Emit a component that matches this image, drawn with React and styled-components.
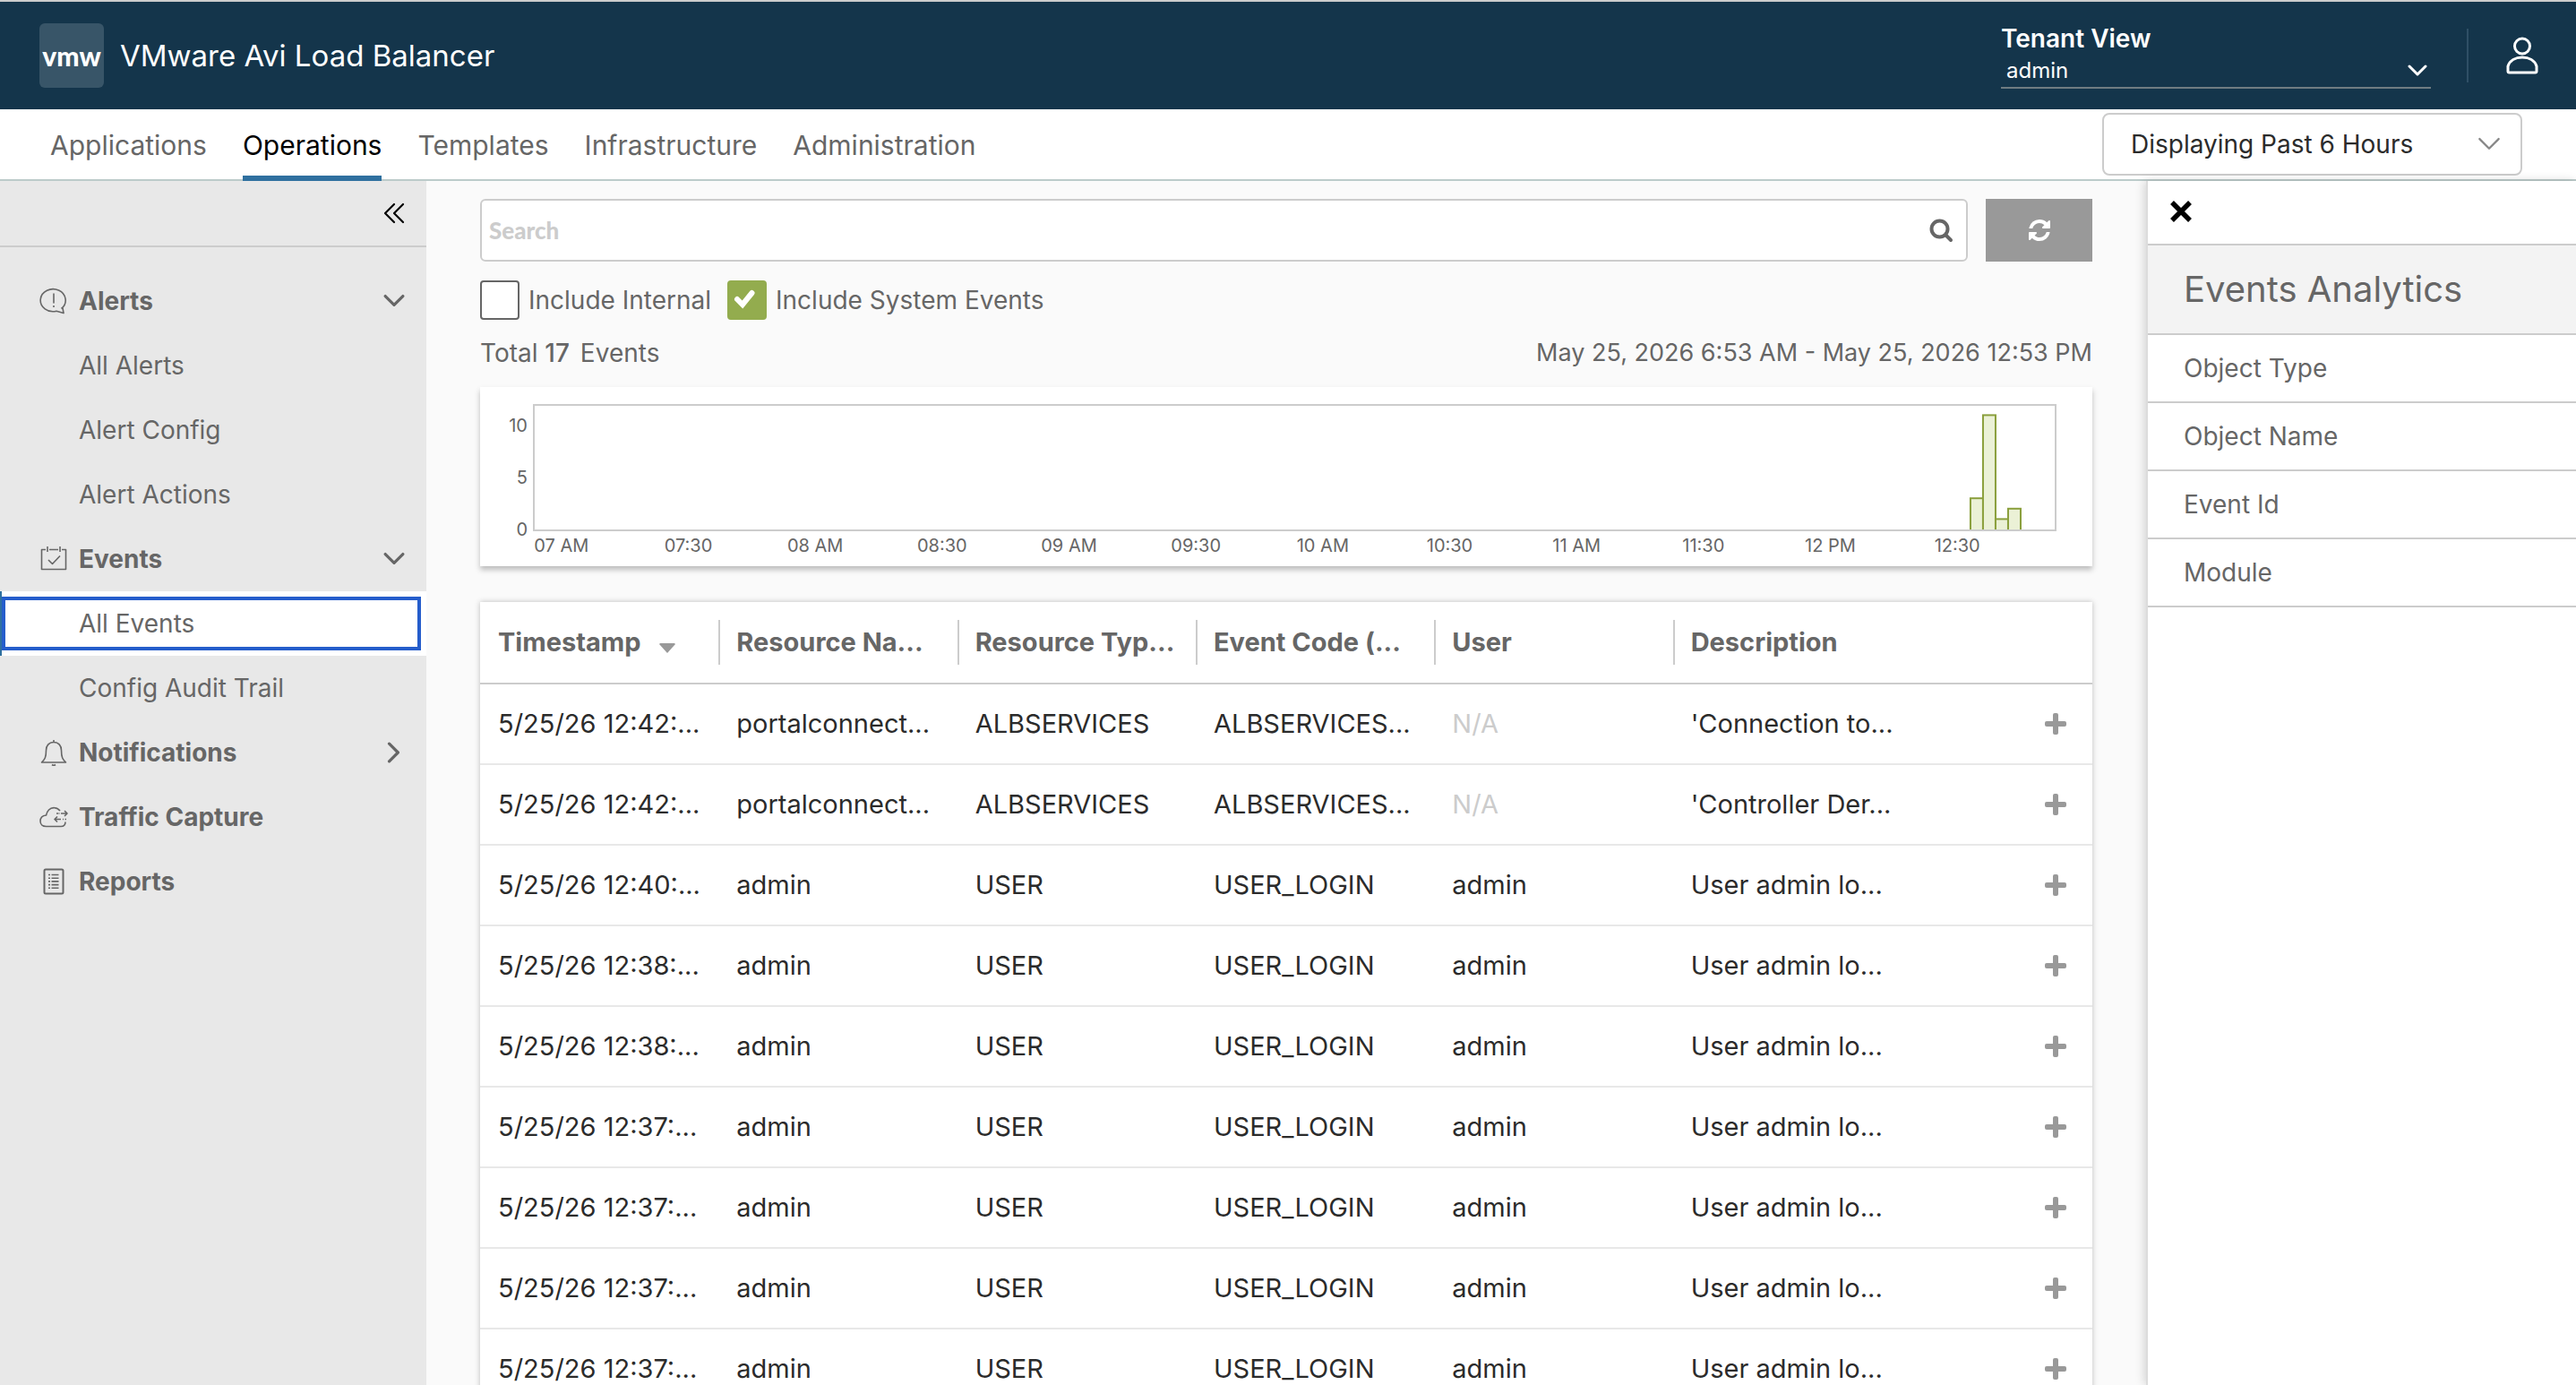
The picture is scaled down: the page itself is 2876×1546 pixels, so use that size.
import React from 'react';
import styled, { createGlobalStyle, css } from 'styled-components';

const colors = {
  header: '#14354b',
  blue: '#2f709f',
  focus: '#255dcb',
  line: '#cccccc',
  text: '#666666',
  dark: '#2b2b2b',
  green: '#93ac4e',
};

const GlobalStyle = createGlobalStyle`
  *, *::before, *::after {
    box-sizing: border-box;
  }

  body {
    margin: 0;
    background: #fafafa;
    color: ${colors.text};
    font: 400 28px/36px Inter, "Open Sans", sans-serif;
  }

  button, input, select {
    margin: 0;
    padding: 0;
    border: 0;
    background: none;
    color: inherit;
    font: inherit;
  }

  svg {
    display: block;
    flex: none;
  }
`;

const Page = styled.div`
  display: flex;
  flex-direction: column;
  height: 100vh;
  overflow: hidden;
`;

/* header */

const Header = styled.header`
  display: flex;
  align-items: center;
  flex: none;
  height: 122px;
  padding: 0 40px 0 44px;
  border-top: 2px solid ${colors.line};
  background: ${colors.header};
  color: #fff;
`;

const Logo = styled.div`
  display: flex;
  align-items: center;
  justify-content: center;
  width: 72px;
  height: 72px;
  border-radius: 6px;
  background: #385568;
  font: 900 30px/36px Lato, sans-serif;
`;

const Product = styled.h1`
  flex: 1;
  margin: 0 0 0 18px;
  font-size: 33px;
  font-weight: 400;
`;

const Tenant = styled.div`
  display: flex;
  flex-direction: column;
  width: 480px;
  margin-right: 40px;
  border-bottom: 2px solid #6f7c82;
`;

const TenantLabel = styled.label`
  font-size: 28px;
  font-weight: 600;
`;

const SelectWrap = styled.div`
  display: grid;
  align-items: center;

  > * {
    grid-area: 1 / 1;
  }

  > svg {
    justify-self: end;
    margin-right: 4px;
    pointer-events: none;
  }
`;

const TenantSelect = styled.select`
  width: 100%;
  height: 36px;
  padding: 0 6px;
  appearance: none;
  font-size: 24px;
`;

const UserArea = styled.div`
  display: flex;
  align-items: center;
  justify-content: flex-end;
  width: 82px;
  height: 60px;
  padding-right: 2px;
  border-left: 2px solid #2f4f66;
`;

const IconButton = styled.button`
  display: flex;
  align-items: center;
  justify-content: center;
  cursor: pointer;
`;

/* main navigation */

const NavBar = styled.nav`
  display: flex;
  align-items: stretch;
  justify-content: space-between;
  flex: none;
  height: 80px;
  padding: 0 60px 0 56px;
  border-bottom: 2px solid #bccbca;
  background: #fff;
`;

const Tabs = styled.div`
  display: flex;
  gap: 40px;
  margin-bottom: -2px;
`;

const Tab = styled.a`
  border-bottom: 6px solid transparent;
  color: ${colors.text};
  font-size: 30px;
  line-height: 80px;
  text-decoration: none;

  ${props => props.$active && css`
    border-color: ${colors.blue};
    color: #000;
  `}
`;

const RangeWrap = styled(SelectWrap)`
  align-self: center;
  width: 469px;
  height: 70px;
  border: 2px solid ${colors.line};
  border-radius: 8px;

  > svg {
    margin-right: 22px;
    color: #888;
  }
`;

const RangeSelect = styled.select`
  width: 100%;
  height: 66px;
  padding: 0 30px;
  appearance: none;
  color: ${colors.dark};
`;

/* sidebar */

const Body = styled.div`
  display: flex;
  flex: 1;
  min-height: 0;
`;

const Sidebar = styled.aside`
  flex: none;
  width: 476px;
  background: #e8e8e8;
`;

const SidebarTop = styled.div`
  display: flex;
  align-items: center;
  justify-content: flex-end;
  height: 74px;
  margin-bottom: 24px;
  padding-right: 24px;
  border-bottom: 2px solid ${colors.line};
`;

const Group = styled.button`
  display: flex;
  align-items: center;
  width: 100%;
  height: 72px;
  padding: 0 24px 0 44px;
  font-weight: 700;
  text-align: left;
`;

const GroupName = styled.span`
  flex: 1;
  margin-left: 12px;
`;

const SideLink = styled.a`
  display: block;
  padding-left: 88px;
  color: ${colors.text};
  line-height: 72px;
  text-decoration: none;
`;

// white strip with the focused link inside it
const ActiveItem = styled.div`
  padding: 6px 6px 6px 0;
  border-left: 2px solid ${colors.blue};
  background: #fff;

  ${SideLink} {
    padding-left: 82px;
    border: 4px solid ${colors.focus};
    line-height: 52px;
  }
`;

/* content */

const Content = styled.main`
  flex: 1;
  min-width: 0;
  padding: 20px 60px 0;
`;

const SearchRow = styled.div`
  display: flex;
  gap: 20px;
  height: 70px;
`;

const SearchBox = styled.div`
  display: flex;
  align-items: center;
  flex: 1;
  padding: 0 14px 0 8px;
  border: 2px solid ${colors.line};
  border-radius: 6px;
  background: #fff;
  color: ${colors.text};
`;

const SearchInput = styled.input`
  flex: 1;
  min-width: 0;
  height: 100%;
  outline: none;
  font: 900 26px/36px Lato, sans-serif;

  &::placeholder {
    color: ${colors.line};
    opacity: 1;
  }
`;

const Refresh = styled(IconButton)`
  width: 119px;
  background: #999;
  color: #fff;
`;

const Filters = styled.div`
  display: flex;
  gap: 18px;
  margin-top: 20px;
`;

const CheckLabel = styled.label`
  display: flex;
  align-items: center;
  gap: 10px;
  height: 46px;
`;

const CheckBox = styled.span`
  display: grid;
  width: 44px;
  height: 44px;

  > * {
    grid-area: 1 / 1;
  }

  > svg {
    margin: 6px 0 0 6px;
    pointer-events: none;
  }
`;

const CheckInput = styled.input`
  width: 44px;
  height: 44px;
  border: 2px solid ${colors.text};
  border-radius: 4px;
  appearance: none;
  background: #fff;

  &:checked {
    border-color: ${colors.green};
    background: ${colors.green};
  }
`;

const Summary = styled.div`
  display: flex;
  justify-content: space-between;
  padding: 18px 0 20px;

  strong {
    margin-right: 4px;
    font-weight: 500;
  }
`;

const Period = styled.span`
  font-size: 27px;
`;

const ChartCard = styled.section`
  height: 200px;
  padding: 19px 40px 0 20px;
  background: #fff;
  box-shadow: 0 4px 6px rgba(0, 0, 0, 0.25);
  font-size: 20px;
  line-height: 24px;
`;

const ChartRow = styled.div`
  display: flex;
  gap: 6px;
  height: 146px;
`;

const AxisY = styled.div`
  display: flex;
  flex-direction: column;
  justify-content: space-between;
  width: 33px;
  height: 140px;
  margin-top: 12px;
  text-align: right;
`;

const Plot = styled.div`
  flex: 1;
  height: 142px;
  border: 2px solid ${colors.line};
`;

const AxisX = styled.div`
  display: grid;
  grid-template-columns: repeat(12, 1fr);
  margin-right: 40px;
  text-align: center;
`;

/* table */

const TableCard = styled.section`
  margin-top: 40px;
  background: #fff;
  box-shadow: 0 0 6px rgba(0, 0, 0, 0.25);
`;

const Table = styled.table`
  width: 100%;
  border-collapse: separate;
  border-spacing: 0;
  table-layout: fixed;
  font-size: 29px;
  white-space: nowrap;
`;

const ActionCol = styled.col`
  width: 202px;
`;

const HeadCell = styled.th`
  height: 92px;
  padding: 0;
  border-bottom: 2px solid ${colors.line};
  font-weight: 700;
  text-align: left;
`;

const HeadLabel = styled.div`
  display: flex;
  align-items: center;
  gap: 20px;
  height: 50px;
  padding-left: ${props => (props.$first ? '20px' : '18px')};
  border-left: ${props => (props.$first ? '0' : `2px solid ${colors.line}`)};

  svg {
    margin-top: 12px;
  }
`;

const Cell = styled.td`
  height: 90px;
  padding: 0 0 0 20px;
  border-bottom: 2px solid #e8e8e8;
  color: ${props => (props.$muted ? colors.line : colors.dark)};
`;

const ActionCell = styled(Cell)`
  padding-right: 29px;
  color: #999;

  button {
    margin-left: auto;
  }
`;

/* analytics panel */

const Panel = styled.aside`
  flex: none;
  width: 480px;
  border-left: 2px solid #dcdcdc;
  background: #fff;
  box-shadow: -2px 0 10px rgba(0, 0, 0, 0.16);
`;

const PanelTop = styled.div`
  display: flex;
  align-items: center;
  height: 72px;
  padding: 0 25px 2px;
  border-bottom: 2px solid ${colors.line};
  color: #000;
`;

const PanelTitle = styled.h2`
  margin: 0;
  padding-left: 40px;
  border-bottom: 2px solid ${colors.line};
  background: #f3f3f3;
  font-size: 40px;
  font-weight: 400;
  line-height: 98px;
`;

const PanelItem = styled.button`
  display: block;
  width: 100%;
  height: 76px;
  padding-left: 40px;
  border-bottom: 2px solid ${colors.line};
  text-align: left;
`;

/* icons */

const Chevron = ({ size = 22, stroke = 4, right }) => (
  <svg width={size} height={size} viewBox="0 0 22 22" fill="none" stroke="currentColor"
    strokeWidth={stroke} strokeLinecap="round" strokeLinejoin="round">
    <path d={right ? 'M6 2l9 9-9 9' : 'M2 6l9 9 9-9'}/>
  </svg>
);

const UserIcon = () => (
  <svg width="36" height="42" viewBox="0 0 36 42" fill="none" stroke="currentColor" strokeWidth="3">
    <circle cx="18" cy="10.5" r="8.5"/>
    <path d="M2 38.5V33C4 26.500 10.500 23 18 23s14 3.500 16 10v5.500q0 1.500-1.500 1.500h-29Q2 40 2 38.500z"/>
  </svg>
);

const CollapseIcon = () => (
  <svg width="24" height="24" viewBox="0 0 24 24" fill="none" stroke="#000"
    strokeWidth="2.200" strokeLinecap="round" strokeLinejoin="round">
    <path d="M12 2L2 12l10 10M22 2L12 12l10 10"/>
  </svg>
);

const SearchIcon = () => (
  <svg width="28" height="28" viewBox="0 0 28 28" fill="none" stroke="currentColor" strokeLinecap="round">
    <circle cx="12.500" cy="12.500" r="9" strokeWidth="4"/>
    <path d="M19.500 19.500l5.500 5.500" strokeWidth="4"/>
  </svg>
);

const RefreshIcon = () => (
  <svg width="28" height="28" viewBox="0 0 1792 1792" fill="currentColor">
    <path d="M1639 1056q0 5-1 7-64 268-268 434.500t-478 166.500q-146 0-282.500-55t-243.500-157l-129 129q-19 19-45 19t-45-19-19-45v-448q0-26 19-45t45-19h448q26 0 45 19t19 45-19 45l-137 137q71 66 161 102t187 36q134 0 250-65t186-179q11-17 53-117 8-23 30-23h192q13 0 22.500 9.500t9.500 22.500zm25-800v448q0 26-19 45t-45 19h-448q-26 0-45-19t-19-45 19-45l138-138q-148-137-349-137-134 0-250 65t-186 179q-11 17-53 117-8 23-30 23h-199q-13 0-22.500-9.500t-9.500-22.500v-7q65-268 270-434.500t480-166.500q146 0 284 55.500t245 156.500l130-129q19-19 45-19t45 19 19 45z"/>
  </svg>
);

const CheckIcon = () => (
  <svg width="28" height="28" viewBox="0 0 28 28" fill="none" stroke="#fff" strokeWidth="6" strokeLinecap="round">
    <path d="M5 15l6 6L21.500 8"/>
  </svg>
);

const CloseIcon = () => (
  <svg width="24" height="24" viewBox="0 0 24 24" fill="none" stroke="currentColor" strokeWidth="5.500">
    <path d="M2 2l20 20M22 2L2 22"/>
  </svg>
);

const PlusIcon = () => (
  <svg width="24" height="24" viewBox="0 0 24 24" fill="currentColor">
    <rect x="9" y="0" width="6" height="24" rx="2"/>
    <rect x="0" y="9" width="24" height="6" rx="2"/>
  </svg>
);

const SortIcon = () => (
  <svg width="18" height="11" viewBox="0 0 18 11" fill="#999">
    <path d="M1 0h16l1 1-9 10L0 1z"/>
  </svg>
);

const groupIcons = {
  alerts: (
    <>
      <path d="M24.500 24.500A14 12.500 0 1 0 19 27.200L27 29.500 26 24"/>
      <path d="M16 7.500v11M16 21v2"/>
    </>
  ),
  events: (
    <path d="M7 5.500H2.500v22h27v-22H25M11 5.500h10M9 2v6M23 2v6M10 17l4.500 4.500L23 12.500"/>
  ),
  notifications: (
    <>
      <path d="M16 4.500c-5.500 0-8.500 4-8.500 9 0 8-1.500 10-5 13.500h27c-3.500-3.500-5-5.500-5-13.500 0-5-3-9-8.500-9zM16 2v2.500"/>
      <path d="M14 29.500q2 1.500 4 0"/>
    </>
  ),
  traffic: (
    <>
      <path d="M23 9C20 5 14 4.500 10.500 8 8.500 10 8 12 7.500 14 3 14.500 1 17.500 1 20.500c0 3.500 2.500 6 6.500 6H24c3 0 5-2 5-5"/>
      <path d="M24 12h7M28 9l3 3-3 3M24 18.500h-7M20 15.500l-3 3 3 3"/>
      <path d="M19 12h2M21.500 12h1M26 18.500h1M28.500 18.500h1.500"/>
    </>
  ),
  reports: (
    <>
      <rect x="5.500" y="2.500" width="21" height="27" rx="1.500" strokeWidth="2"/>
      <path d="M10 8.500h2M10 12.200h2M10 15.900h2M10 19.600h2M10 23.300h2M13.500 8.500h8M13.500 12.200h8M13.500 15.900h8M13.500 19.600h8M13.500 23.300h8"/>
    </>
  ),
};

const GroupIcon = ({ name }) => (
  <svg width="32" height="32" viewBox="0 0 32 32" fill="none" stroke="currentColor" strokeWidth="1.600"
    strokeLinejoin="round">
    {groupIcons[name]}
  </svg>
);

/* data */

const tabs = ['Applications', 'Operations', 'Templates', 'Infrastructure', 'Administration'];

const groups = [
  { name: 'Alerts', icon: 'alerts', open: true, items: ['All Alerts', 'Alert Config', 'Alert Actions'] },
  { name: 'Events', icon: 'events', open: true, items: ['All Events', 'Config Audit Trail'] },
  { name: 'Notifications', icon: 'notifications', open: false, items: [] },
  { name: 'Traffic Capture', icon: 'traffic' },
  { name: 'Reports', icon: 'reports' },
];

const hours = [
  '07 AM', '07:30', '08 AM', '08:30', '09 AM', '09:30',
  '10 AM', '10:30', '11 AM', '11:30', '12 PM', '12:30',
];

const counts = [3, 11, 1, 2];

const columns = ['Timestamp', 'Resource Na...', 'Resource Typ...', 'Event Code (...', 'User', 'Description'];

const login = time => [`5/25/26 ${time}:...`, 'admin', 'USER', 'USER_LOGIN', 'admin', 'User admin lo...'];

const events = [
  ['5/25/26 12:42:...', 'portalconnect...', 'ALBSERVICES', 'ALBSERVICES...', 'N/A', "'Connection to..."],
  ['5/25/26 12:42:...', 'portalconnect...', 'ALBSERVICES', 'ALBSERVICES...', 'N/A', "'Controller Der..."],
  ...['12:40', '12:38', '12:38', '12:37', '12:37', '12:37', '12:37'].map(login),
];

const Chart = () => (
  <ChartCard>
    <ChartRow>
      <AxisY>
        <span>10</span>
        <span>5</span>
        <span>0</span>
      </AxisY>
      <Plot>
        <svg width="100%" height="138" viewBox="0 0 1696 138" preserveAspectRatio="none">
          {counts.map((count, idx) =>
            <rect key={idx} x={1602 + idx * 14} y={138 - count * 11.6} width="14" height={count * 11.6 + 4}
              fill="#ebf1d6" stroke="#8a9f3c" strokeWidth="2"/>)}
        </svg>
      </Plot>
    </ChartRow>
    <AxisX>
      {hours.map(hour => <span key={hour}>{hour}</span>)}
    </AxisX>
  </ChartCard>
);

const EventsTable = () => (
  <TableCard>
    <Table>
      <colgroup>
        {columns.map(name => <col key={name}/>)}
        <ActionCol/>
      </colgroup>
      <thead>
        <tr>
          {columns.map((name, idx) =>
            <HeadCell key={name} scope="col">
              <HeadLabel $first={idx === 0}>
                {name}
                {idx === 0 && <SortIcon/>}
              </HeadLabel>
            </HeadCell>)}
          <HeadCell as="td"/>
        </tr>
      </thead>
      <tbody>
        {events.map((row, rowIdx) =>
          <tr key={rowIdx}>
            {row.map((value, idx) =>
              <Cell key={idx} $muted={value === 'N/A'}>{value}</Cell>)}
            <ActionCell>
              <IconButton aria-label="Expand"><PlusIcon/></IconButton>
            </ActionCell>
          </tr>)}
      </tbody>
    </Table>
  </TableCard>
);

const App = () => (
  <Page>
    <GlobalStyle/>
    <Header>
      <Logo>vmw</Logo>
      <Product>VMware Avi Load Balancer</Product>
      <Tenant>
        <TenantLabel htmlFor="tenant">Tenant View</TenantLabel>
        <SelectWrap>
          <TenantSelect id="tenant">
            <option>admin</option>
          </TenantSelect>
          <Chevron stroke={3}/>
        </SelectWrap>
      </Tenant>
      <UserArea>
        <IconButton aria-label="Account"><UserIcon/></IconButton>
      </UserArea>
    </Header>
    <NavBar>
      <Tabs>
        {tabs.map(name => <Tab key={name} href="#" $active={name === 'Operations'}>{name}</Tab>)}
      </Tabs>
      <RangeWrap>
        <RangeSelect aria-label="Time range">
          <option>Displaying Past 6 Hours</option>
        </RangeSelect>
        <Chevron size={26} stroke={2}/>
      </RangeWrap>
    </NavBar>
    <Body>
      <Sidebar>
        <SidebarTop>
          <IconButton aria-label="Collapse"><CollapseIcon/></IconButton>
        </SidebarTop>
        {groups.map(({ name, icon, open, items }) =>
          <React.Fragment key={name}>
            <Group>
              <GroupIcon name={icon}/>
              <GroupName>{name}</GroupName>
              {items && <Chevron size={24} stroke={3} right={!open}/>}
            </Group>
            {items && items.map(item => (item === 'All Events'
              ? <ActiveItem key={item}><SideLink href="#">{item}</SideLink></ActiveItem>
              : <SideLink key={item} href="#">{item}</SideLink>))}
          </React.Fragment>)}
      </Sidebar>
      <Content>
        <SearchRow>
          <SearchBox>
            <SearchInput aria-label="Search" placeholder="Search"/>
            <SearchIcon/>
          </SearchBox>
          <Refresh aria-label="Refresh"><RefreshIcon/></Refresh>
        </SearchRow>
        <Filters>
          <CheckLabel>
            <CheckBox><CheckInput type="checkbox"/></CheckBox>
            Include Internal
          </CheckLabel>
          <CheckLabel>
            <CheckBox>
              <CheckInput type="checkbox" defaultChecked/>
              <CheckIcon/>
            </CheckBox>
            Include System Events
          </CheckLabel>
        </Filters>
        <Summary>
          <span>Total <strong>17</strong> Events</span>
          <Period>May 25, 2026 6:53 AM - May 25, 2026 12:53 PM</Period>
        </Summary>
        <Chart/>
        <EventsTable/>
      </Content>
      <Panel>
        <PanelTop>
          <IconButton aria-label="Close"><CloseIcon/></IconButton>
        </PanelTop>
        <PanelTitle>Events Analytics</PanelTitle>
        <PanelItem>Object Type</PanelItem>
        <PanelItem>Object Name</PanelItem>
        <PanelItem>Event Id</PanelItem>
        <PanelItem>Module</PanelItem>
      </Panel>
    </Body>
  </Page>
);

export default App;
